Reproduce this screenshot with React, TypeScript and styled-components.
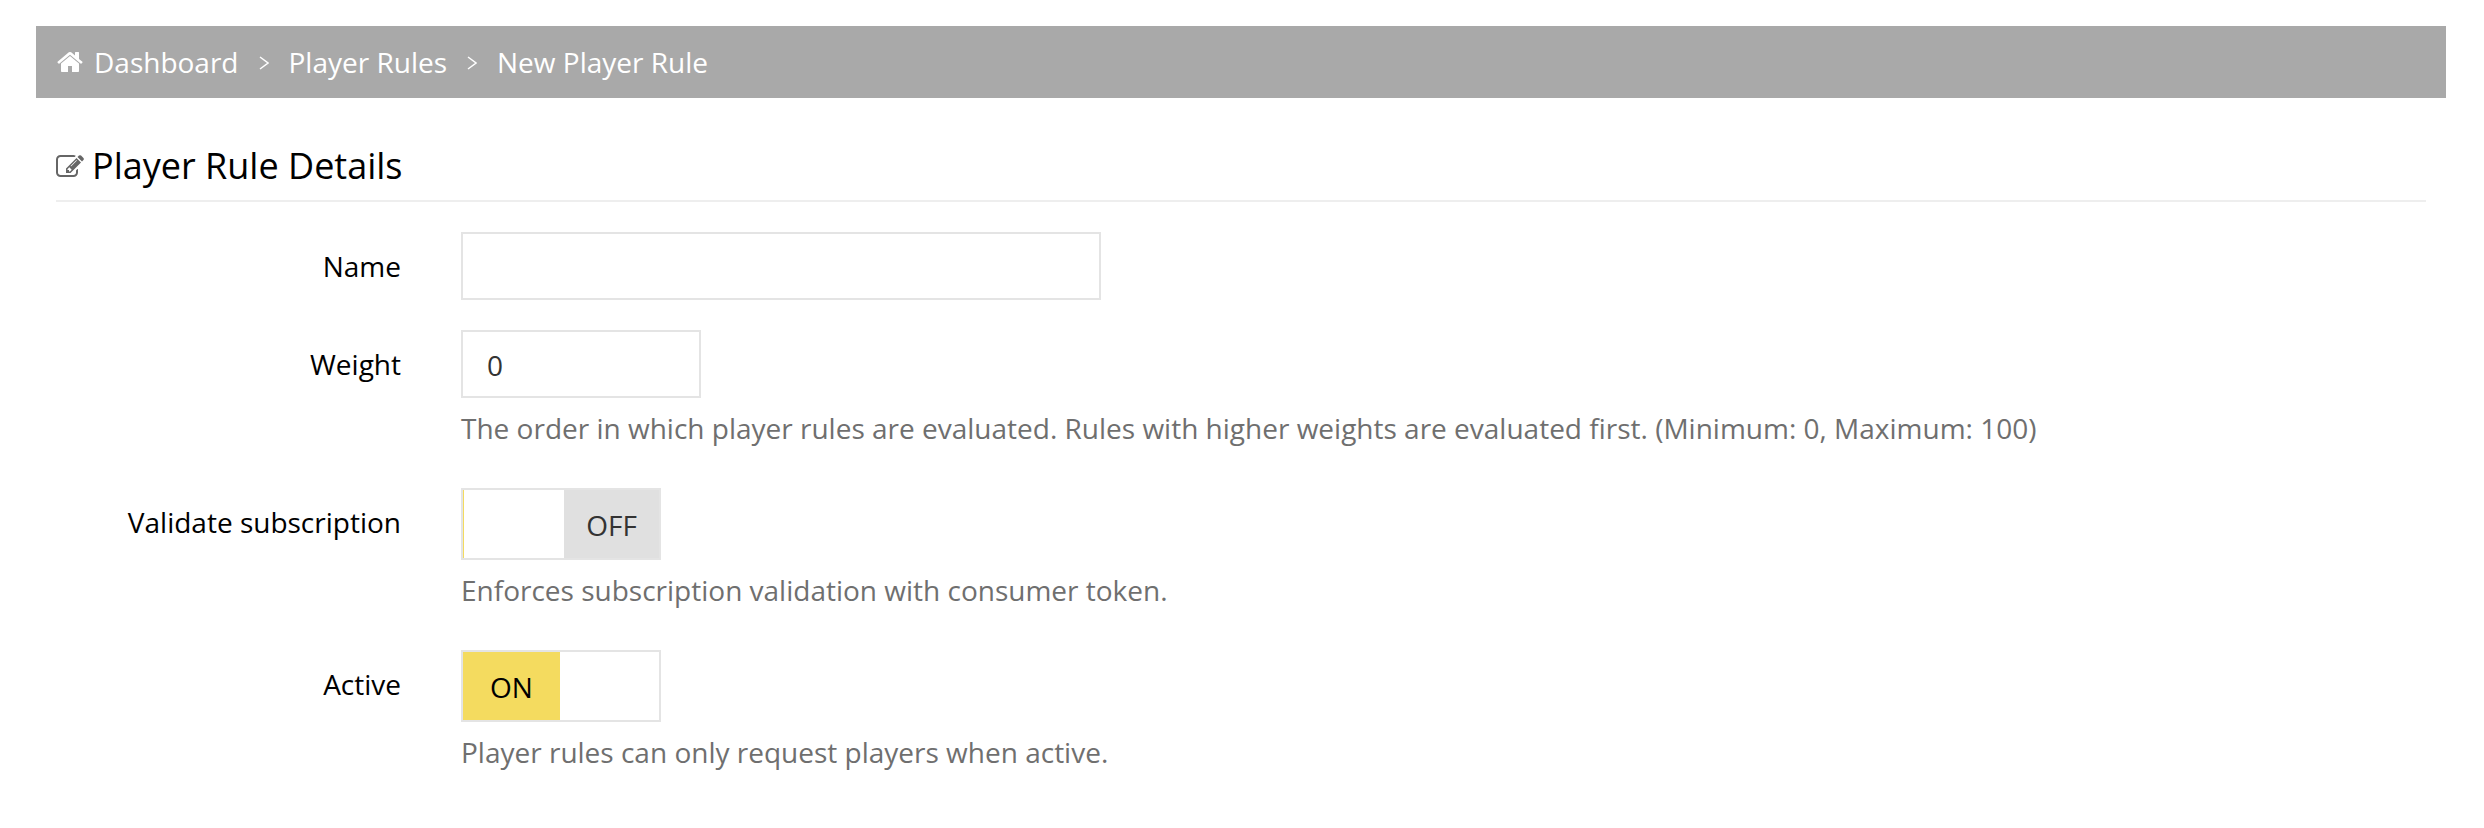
import React from 'react';
import styled, { createGlobalStyle } from 'styled-components';

const GlobalStyle = createGlobalStyle`
  html, body {
    margin: 0;
    padding: 0;
    background: #fff;
  }

  body {
    font-family: "Open Sans", "Noto Sans", sans-serif;
    font-size: 28px;
    color: #000;
  }
`;

const HOME_PATH =
  'M1472 992v480q0 26-19 45t-45 19h-384v-384h-256v384h-384q-26 0-45-19t-19-45v-480q0-1 .5-3t.5-3l575-474 575 474q1 2 1 6zm223-69l-62 74q-8 9-21 11h-3q-13 0-21-7l-692-577-692 577q-12 8-24 7-13-2-21-11l-62-74q-8-10-7-23.5t11-21.5l719-599q32-26 76-26t76 26l244 204v-195q0-14 9-23t23-9h192q14 0 23 9t9 23v408l219 182q10 8 11 21.5t-7 23.5z';

const EDIT_PATH =
  'M888 1184l116-116-152-152-116 116v56h96v96h56zm440-720q-16-16-33 1l-350 350q-17 17-1 33t33-1l350-350q17-17 1-33zm80 594v190q0 119-84.5 203.5t-203.5 84.5h-832q-119 0-203.5-84.5t-84.5-203.5v-832q0-119 84.5-203.5t203.5-84.5h832q63 0 117 25 15 7 18 23 3 17-9 29l-49 49q-14 14-32 8-23-6-45-6h-832q-66 0-113 47t-47 113v832q0 66 47 113t113 47h832q66 0 113-47t47-113v-126q0-13 9-22l64-64q15-15 35-7t20 29zm-96-738l288 288-672 672h-288v-288zm444 132l-92 92-288-288 92-92q28-28 68-28t68 28l152 152q28 28 28 68t-28 68z';

const App = () => {
  return (
    <>
      <GlobalStyle />
      <Page>
        <Breadcrumb>
          <HomeIcon viewBox="0 0 1792 1792">
            <path d={HOME_PATH} />
          </HomeIcon>
          <Crumb>Dashboard</Crumb>
          <Separator viewBox="0 0 10 14">
            <path d="M1 1l8 6-8 6" />
          </Separator>
          <Crumb>Player Rules</Crumb>
          <Separator viewBox="0 0 10 14">
            <path d="M1 1l8 6-8 6" />
          </Separator>
          <Crumb>New Player Rule</Crumb>
        </Breadcrumb>
        <Panel>
          <Heading>
            <EditIcon viewBox="0 0 1792 1792">
              <path d={EDIT_PATH} />
            </EditIcon>
            Player Rule Details
          </Heading>
          <Form>
            <Row>
              <Label>Name</Label>
              <Field>
                <Input $width={640} defaultValue="" />
              </Field>
            </Row>
            <Row>
              <Label>Weight</Label>
              <Field>
                <Input $width={240} defaultValue="0" />
                <Help>
                  The order in which player rules are evaluated. Rules with
                  higher weights are evaluated first. (Minimum: 0, Maximum: 100)
                </Help>
              </Field>
            </Row>
            <Row>
              <Label>Validate subscription</Label>
              <Field>
                <Toggle $on={false}>
                  <ToggleBlank />
                  <ToggleOff>OFF</ToggleOff>
                </Toggle>
                <Help>Enforces subscription validation with consumer token.</Help>
              </Field>
            </Row>
            <Row>
              <Label>Active</Label>
              <Field>
                <Toggle $on>
                  <ToggleOn>ON</ToggleOn>
                  <ToggleBlank />
                </Toggle>
                <Help>Player rules can only request players when active.</Help>
              </Field>
            </Row>
          </Form>
        </Panel>
      </Page>
    </>
  );
};

export default App;

const Page = styled.div`
  padding: 26px 38px 0 36px;
`;

const Breadcrumb = styled.nav`
  display: flex;
  align-items: center;
  height: 72px;
  padding-left: 20px;
  background: #a9a9a9;
  color: #fff;
`;

const HomeIcon = styled.svg`
  width: 28px;
  height: 28px;
  margin-right: 10px;
  fill: #fff;
`;

const Crumb = styled.span`
  font-size: 28px;
  line-height: 36px;
`;

const Separator = styled.svg`
  width: 10px;
  height: 14px;
  margin: 2px 20px 0 20px;
  fill: none;
  stroke: #fff;
  stroke-width: 1.5;
`;

const Panel = styled.section`
  padding: 0 20px;
`;

const Heading = styled.h2`
  display: flex;
  align-items: center;
  margin: 0;
  height: 104px;
  font-size: 36px;
  font-weight: 400;
  border-bottom: 2px solid #eee;
  box-sizing: border-box;
  padding-top: 33px;
`;

const EditIcon = styled.svg`
  width: 28px;
  height: 28px;
  margin-right: 8px;
  margin-top: 3px;
  fill: #666;
`;

const Form = styled.div`
  display: flex;
  flex-direction: column;
  gap: 30px;
  padding-top: 30px;
`;

const Row = styled.div`
  display: grid;
  grid-template-columns: 345px 1fr;
  column-gap: 60px;
`;

const Label = styled.label`
  text-align: right;
  font-size: 28px;
  line-height: 68px;
`;

const Field = styled.div`
  display: flex;
  flex-direction: column;
  align-items: flex-start;
`;

const Input = styled.input<{ $width: number }>`
  box-sizing: border-box;
  width: ${(p) => p.$width}px;
  height: 68px;
  padding: 2px 24px 0;
  border: 2px solid #e4e4e4;
  background: #fff;
  font-family: inherit;
  font-size: 28px;
  color: #333;
  outline: none;
`;

const Help = styled.p`
  margin: 12px 0 12px;
  font-size: 28px;
  line-height: 36px;
  color: #6f6f6f;
`;

const Toggle = styled.div<{ $on: boolean }>`
  box-sizing: border-box;
  display: flex;
  width: 200px;
  height: 72px;
  border: 2px solid #e4e4e4;
  background: #fff;
  box-shadow: ${(p) => (p.$on ? 'none' : 'inset 1px 0 0 #f4db5f')};
`;

const ToggleBlank = styled.span`
  flex: 1;
`;

const ToggleOff = styled.span`
  display: flex;
  align-items: center;
  justify-content: center;
  width: 95px;
  padding-top: 2px;
  background: #e0e0e0;
  color: #333;
  font-size: 28px;
`;

const ToggleOn = styled.span`
  display: flex;
  align-items: center;
  justify-content: center;
  width: 97px;
  padding-top: 2px;
  background: #f4db5f;
  color: #000;
  font-size: 28px;
`;
